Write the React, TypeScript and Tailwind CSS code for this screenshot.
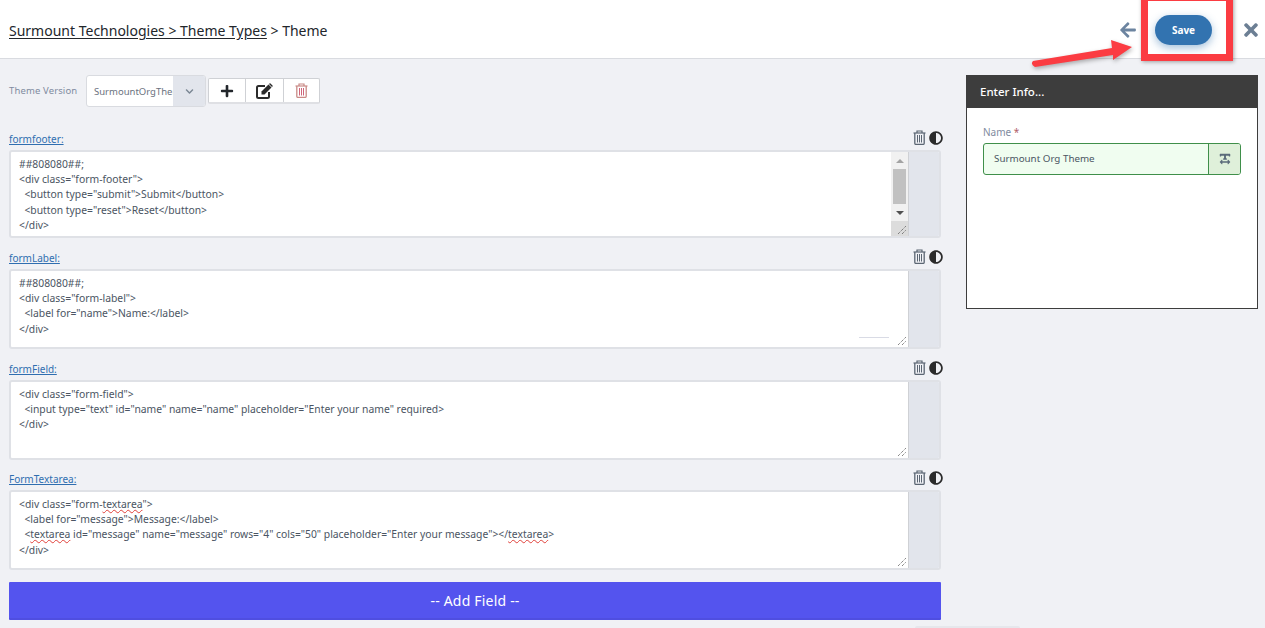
import { FaArrowLeft, FaTimes, FaPlus, FaAdjust, FaChevronDown, FaTextWidth } from "react-icons/fa";

const fields = [
  {
    name: "formfooter:",
    h: "h-[88px]",
    scroll: true,
    mark: false,
    lines: [
      <>##808080##;</>,
      <>&lt;div class="form-footer"&gt;</>,
      <>&nbsp; &lt;button type="submit"&gt;Submit&lt;/button&gt;</>,
      <>&nbsp; &lt;button type="reset"&gt;Reset&lt;/button&gt;</>,
      <>&lt;/div&gt;</>,
    ],
  },
  {
    name: "formLabel:",
    h: "h-[80px]",
    scroll: false,
    mark: true,
    lines: [
      <>##808080##;</>,
      <>&lt;div class="form-label"&gt;</>,
      <>&nbsp; &lt;label for="name"&gt;Name:&lt;/label&gt;</>,
      <>&lt;/div&gt;</>,
    ],
  },
  {
    name: "formField:",
    h: "h-[80px]",
    scroll: false,
    mark: false,
    lines: [
      <>&lt;div class="form-field"&gt;</>,
      <>&nbsp; &lt;input type="text" id="name" name="name" placeholder="Enter your name" required&gt;</>,
      <>&lt;/div&gt;</>,
    ],
  },
  {
    name: "FormTextarea:",
    h: "h-[80px]",
    scroll: false,
    mark: false,
    lines: [
      <>&lt;div class="form-<Typo>textarea</Typo>"&gt;</>,
      <>&nbsp; &lt;label for="message"&gt;Message:&lt;/label&gt;</>,
      <>&nbsp; &lt;<Typo>textarea</Typo> id="message" name="message" rows="4" cols="50" placeholder="Enter your message"&gt;&lt;/<Typo>textarea</Typo>&gt;</>,
      <>&lt;/div&gt;</>,
    ],
  },
];

function Typo({ children }: { children: React.ReactNode }) {
  return <span className="underline decoration-wavy decoration-[#e0403a] decoration-1 underline-offset-1">{children}</span>;
}

// fa-trash-o style can: lid, handle, body and three bars
function Trash({ color, bars }: { color: string; bars: string }) {
  return (
    <svg width="13" height="15" viewBox="0 0 13 15" fill="none">
      <path d="M0.5 3 H12.5" stroke={color} strokeWidth="1.2" />
      <path d="M4 3 V1 H9 V3" stroke={color} strokeWidth="1.2" />
      <path d="M1.8 3 V13.2 Q1.8 14.4 3 14.4 H10 Q11.2 14.4 11.2 13.2 V3" stroke={color} strokeWidth="1.3" />
      <path d="M4.5 5 V12.5 M6.5 5 V12.5 M8.5 5 V12.5" stroke={bars} strokeWidth="1" />
    </svg>
  );
}

function EditIcon() {
  return (
    <svg width="17" height="16" viewBox="0 0 17 16" fill="none">
      <path d="M9 3 H2.5 Q1 3 1 4.5 V13.5 Q1 15 2.5 15 H11.5 Q13 15 13 13.5 V9" stroke="#2b2b2b" strokeWidth="2" />
      <path d="M5.5 8.5 L12.5 1.5 L15.5 4.5 L8.5 11.5 H5.5 Z" fill="#2b2b2b" />
      <path d="M13.5 0.5 Q14 0 14.5 0.5 L16.5 2.5 Q17 3 16.5 3.5 L16 4 L13 1 Z" fill="#2b2b2b" />
    </svg>
  );
}

function Grip() {
  return (
    <svg width="10" height="10" viewBox="0 0 10 10" className="absolute bottom-[1px] right-[1px]">
      <path d="M1 9 L9 1 M5 9 L9 5" stroke="#555" strokeWidth="1" strokeDasharray="1 1" fill="none" />
    </svg>
  );
}

function Scrollbar() {
  return (
    <div className="flex w-[17px] shrink-0 flex-col bg-[#f1f1f1]">
      <div className="flex h-[17px] items-center justify-center">
        <div className="h-0 w-0 border-x-4 border-b-[4px] border-x-transparent border-b-[#a3a3a3]" />
      </div>
      <div className="mx-[2px] h-[35px] bg-[#c1c1c1]" />
      <div className="flex h-[17px] items-center justify-center">
        <div className="h-0 w-0 border-x-4 border-t-[4px] border-x-transparent border-t-[#505050]" />
      </div>
      <div className="flex-1 bg-[#dcdcdc]" />
    </div>
  );
}

export default function App() {
  return (
    <div className="relative h-[628px] w-[1265px] overflow-hidden bg-[#f0f1f5] font-['Noto_Sans',sans-serif] text-[#333]">
      <header className="flex h-[59px] items-center justify-between border-b border-[#d9dbe0] bg-white pl-[9px] pr-[4px] pt-[2px]">
        <div className="text-[14px] text-[#22262b]">
          <span className="underline underline-offset-2">Surmount Technologies &gt; Theme Types</span> &gt; Theme
        </div>
        <div className="flex items-center">
          <FaArrowLeft className="text-[18px] text-[#6c84a0]" />
          <button className="ml-[18px] h-[30px] w-[57px] rounded-full bg-[#3273b0] text-[10px] font-bold text-white shadow-[0_3px_8px_rgba(50,115,176,0.45)]">
            Save
          </button>
          <FaTimes className="ml-[29px] text-[20px] text-[#6c7f94]" />
        </div>
      </header>

      <div className="flex pl-[9px] pt-[16px]">
        <main className="w-[932px]">
          <div className="flex h-[32px]">
            <label className="mt-[9px] w-[77px] text-[9.5px] tracking-[0.13px] text-[#7f8ba0]">Theme Version</label>
            <div className="flex h-[32px] w-[120px] overflow-hidden rounded-[3px] border border-[#d9dbe0] bg-white">
              <div className="flex-1 overflow-hidden whitespace-nowrap pl-[7px] pt-[9px] text-[9.5px] text-[#6b7280]">
                SurmountOrgTheme
              </div>
              <div className="flex w-[32px] shrink-0 items-center justify-center bg-[#e2e5ec]">
                <FaChevronDown className="text-[9px] text-[#7b8794]" />
              </div>
            </div>
            <div className="ml-[2px] mt-[3px] flex h-[26px] w-[112px] rounded-[2px] border border-[#cfd1d5] border-b-2 border-b-[#dfe0e4] bg-white">
              <div className="flex w-[36px] items-center justify-center">
                <FaPlus className="text-[14px] text-[#22262b]" />
              </div>
              <div className="flex w-[39px] items-center justify-center border-x border-[#cfd1d5]">
                <EditIcon />
              </div>
              <div className="flex flex-1 items-center justify-center">
                <Trash color="#c98a86" bars="#d0657a" />
              </div>
            </div>
          </div>

          <div className="mt-[23px] flex flex-col gap-[11px]">
            {fields.map((f, idx) => (
              <section key={f.name} className={idx === 3 ? "-mt-[1px]" : ""}>
                <div className="flex h-[20px] items-center justify-between pb-[2px]">
                  <a className="text-[10px] text-[#2f6eb0] underline">{f.name}</a>
                  <div className="-mr-[2px] flex items-center gap-[3px] pb-[3px]">
                    <Trash color="#5b6673" bars="#5b6673" />
                    <FaAdjust className="text-[14px] text-[#2b2b2b]" />
                  </div>
                </div>
                <div className={`flex ${f.h} overflow-hidden rounded-[3px] border-2 border-[#dfe1e6] bg-white`}>
                  <div className="relative flex min-w-0 flex-1">
                    <div className="flex-1 whitespace-nowrap pl-[8px] pt-[5px] text-[10.35px] leading-[15.2px] text-[#4b5563]">
                      {f.lines.map((line, i) => (
                        <div key={i}>{line}</div>
                      ))}
                    </div>
                    {f.scroll ? <Scrollbar /> : null}
                    {f.mark ? <div className="absolute bottom-[9px] right-[19px] h-[1px] w-[30px] bg-[#d9dbe5]" /> : null}
                    <Grip />
                  </div>
                  <div className="w-[31px] shrink-0 border-l border-[#cfd1d5] bg-[#e2e5ec]" />
                </div>
              </section>
            ))}
          </div>

          <button className="mt-[12px] h-[38px] w-full rounded-[1px] border-b-2 border-b-[#4f4ee0] bg-[#5454ee] text-[14px] tracking-[0.2px] text-white">
            -- Add Field --
          </button>
        </main>

        <aside className="ml-[25px] h-[234px] w-[292px] border border-[#3d3d3d] bg-white">
          <div className="flex h-[32px] items-center bg-[#3d3d3d] pl-[13px] text-[11.5px] font-medium text-white">Enter Info...</div>
          <div className="px-[16px] pt-[17px]">
            <label className="block text-[10px] text-[#7f8ba0]">
              Name <span className="text-[#b0606a]">*</span>
            </label>
            <div className="mt-[3px] flex h-[32px] overflow-hidden rounded-[3px] border border-[#3f8f4a] bg-[#f0fdf0]">
              <div className="flex flex-1 items-center pl-[10px] text-[9.8px] text-[#4b5563]">Surmount Org Theme</div>
              <div className="flex w-[32px] items-center justify-center border-l border-[#3f8f4a] bg-[#dff0da] text-[#5b6b7a]">
                <FaTextWidth className="text-[12px]" />
              </div>
            </div>
          </div>
        </aside>
      </div>

      {/* faint smudge along the bottom edge of the capture */}
      <div className="absolute left-[915px] top-[626px] h-[4px] w-[105px] rounded-full bg-[#e6e7ec]" />

      {/* annotation drawn over the screenshot */}
      <div className="absolute left-[1141px] top-[-6px] h-[67px] w-[92px] border-[7px] border-[#fb3c42] shadow-[1px_1px_4px_rgba(0,0,0,0.35)]" />
      <svg className="absolute left-[1025px] top-0 drop-shadow-[1px_2px_2px_rgba(0,0,0,0.3)]" width="120" height="75" viewBox="0 0 120 75">
        <path d="M8 61 L87 48 L86 40 L107 47 L88 60 L88 55 L10 67 Q5 64 8 61 Z" fill="#fb3c42" />
      </svg>
    </div>
  );
}
